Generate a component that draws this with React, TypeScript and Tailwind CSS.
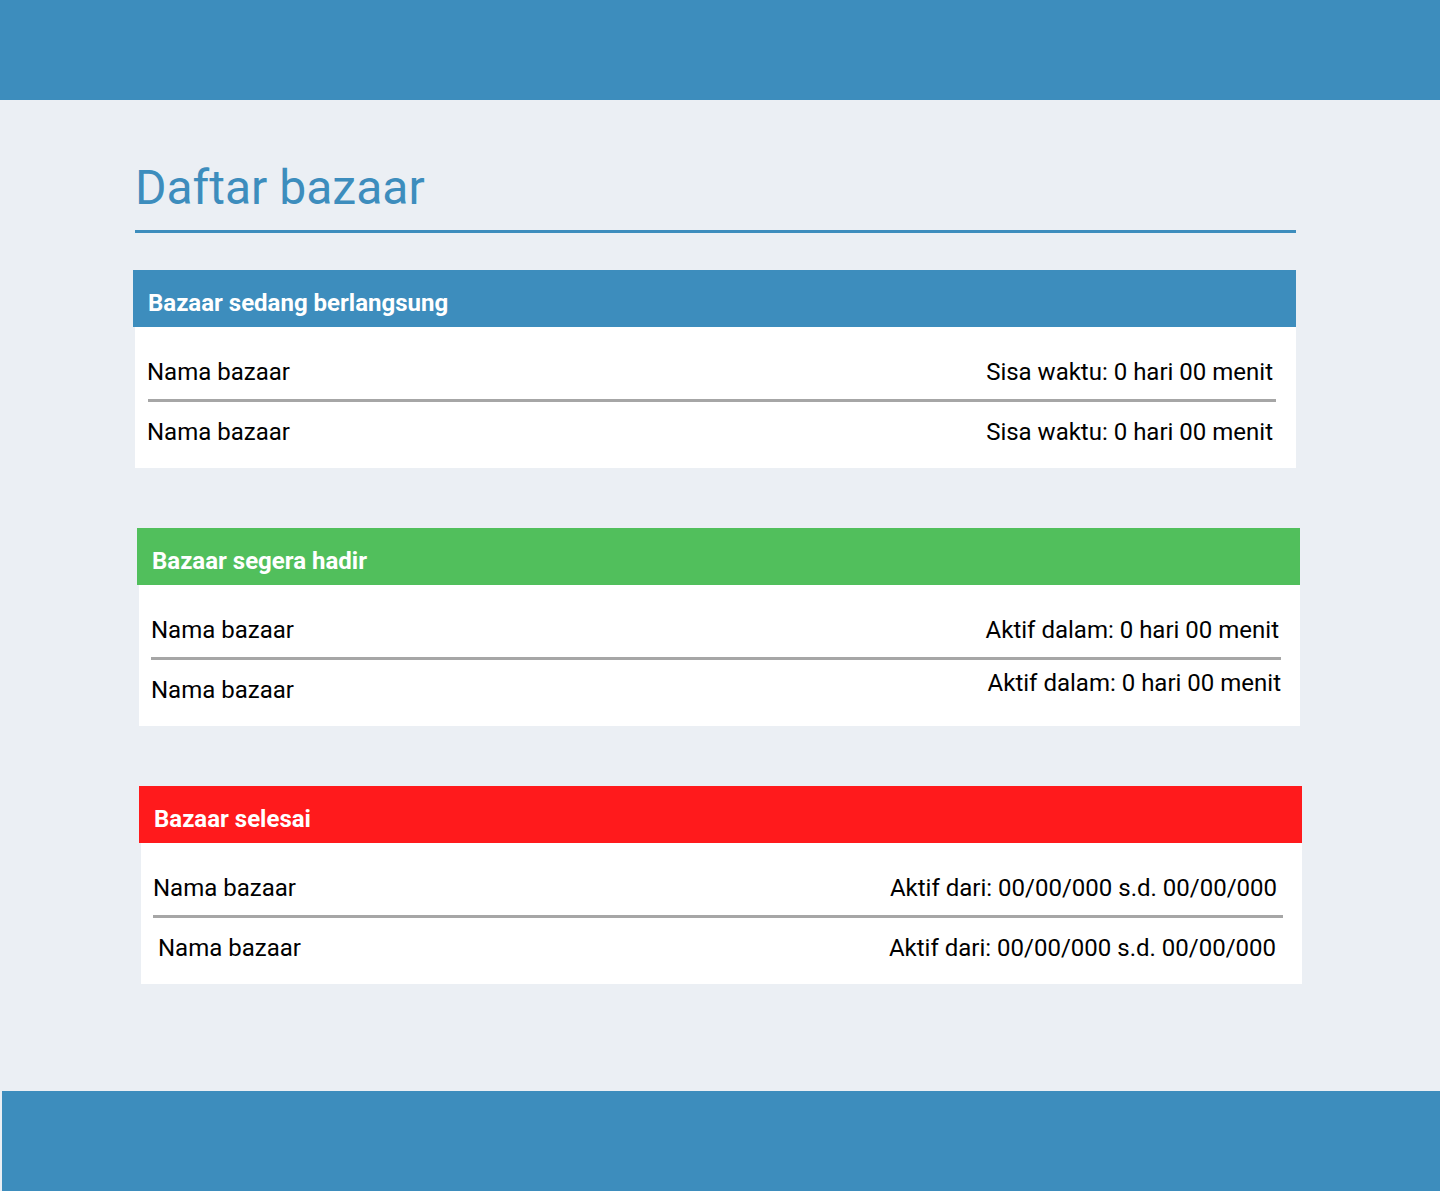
import React from "react";

type Row = {
    name: string;
    info: string;
    nameClass?: string;
    infoClass?: string;
};

type Section = {
    title: string;
    color: string;
    headClass: string;
    bodyClass: string;
    rowClass: string;
    lineClass: string;
    rows: Row[];
};

const sections: Section[] = [
    {
        title: "Bazaar sedang berlangsung",
        color: "bg-[#3d8dbd]",
        headClass: "ml-[133px] w-[1163px]",
        bodyClass: "ml-[135px] w-[1161px]",
        rowClass: "pl-[12px] pr-[23px]",
        lineClass: "ml-[13px] mr-[20px]",
        rows: [
            { name: "Nama bazaar", info: "Sisa waktu: 0 hari 00 menit" },
            { name: "Nama bazaar", info: "Sisa waktu: 0 hari 00 menit" },
        ],
    },
    {
        title: "Bazaar segera hadir",
        color: "bg-[#51bf5c]",
        headClass: "ml-[137px] w-[1163px]",
        bodyClass: "ml-[139px] w-[1161px]",
        rowClass: "pl-[12px] pr-[21px]",
        lineClass: "ml-[12px] mr-[19px]",
        rows: [
            { name: "Nama bazaar", info: "Aktif dalam: 0 hari 00 menit" },
            { name: "Nama bazaar", info: "Aktif dalam: 0 hari 00 menit", infoClass: "-mt-[7px] -mr-[2px]" },
        ],
    },
    {
        title: "Bazaar selesai",
        color: "bg-[#ff1a1c]",
        headClass: "ml-[139px] w-[1163px]",
        bodyClass: "ml-[141px] w-[1161px]",
        rowClass: "pl-[12px] pr-[25px]",
        lineClass: "ml-[12px] mr-[19px]",
        rows: [
            { name: "Nama bazaar", info: "Aktif dari: 00/00/000 s.d. 00/00/000" },
            { name: "Nama bazaar", info: "Aktif dari: 00/00/000 s.d. 00/00/000", nameClass: "ml-[5px]", infoClass: "mr-[1px]" },
        ],
    },
];

const BazaarSection = ({ section }: { section: Section }) => {
    return (
        <div className="mt-[60px] first:mt-0">
            <div className={`${section.headClass} ${section.color} h-[57px] pt-[19px] pl-[15px]`}>
                <h2 className="text-[24px] leading-[28px] font-bold text-white">{section.title}</h2>
            </div>
            <div className={`${section.bodyClass} bg-white pt-[30px] pb-[21px]`}>
                {section.rows.map((row, index) => (
                    <div key={index}>
                        {index > 0 && <div className={`${section.lineClass} h-[3px] bg-[#a6a6a6] mt-[12px] mb-[15px]`} />}
                        <div className={`flex justify-between items-start h-[30px] ${section.rowClass}`}>
                            <span className={`text-[24px] leading-[30px] text-black ${row.nameClass ?? ""}`}>{row.name}</span>
                            <span className={`text-[24px] leading-[30px] text-black ${row.infoClass ?? ""}`}>{row.info}</span>
                        </div>
                    </div>
                ))}
            </div>
        </div>
    );
};

export default function App() {
    return (
        <div className="min-h-screen w-full bg-[#ebeff4] font-['Roboto',sans-serif]">
            <header className="h-[100px] w-full bg-[#3d8dbd]" />

            <main className="pt-[60px]">
                <h1 className="ml-[135px] text-[48px] leading-[56px] font-normal text-[#3d8dbd]">Daftar bazaar</h1>
                <div className="ml-[135px] w-[1161px] h-[3px] mt-[14px] bg-[#3d8dbd]" />

                <div className="mt-[37px]">
                    {sections.map((section, index) => (
                        <BazaarSection key={index} section={section} />
                    ))}
                </div>
            </main>

            <footer className="ml-[2px] mt-[107px] h-[100px] bg-[#3d8dbd]" />
        </div>
    );
}
